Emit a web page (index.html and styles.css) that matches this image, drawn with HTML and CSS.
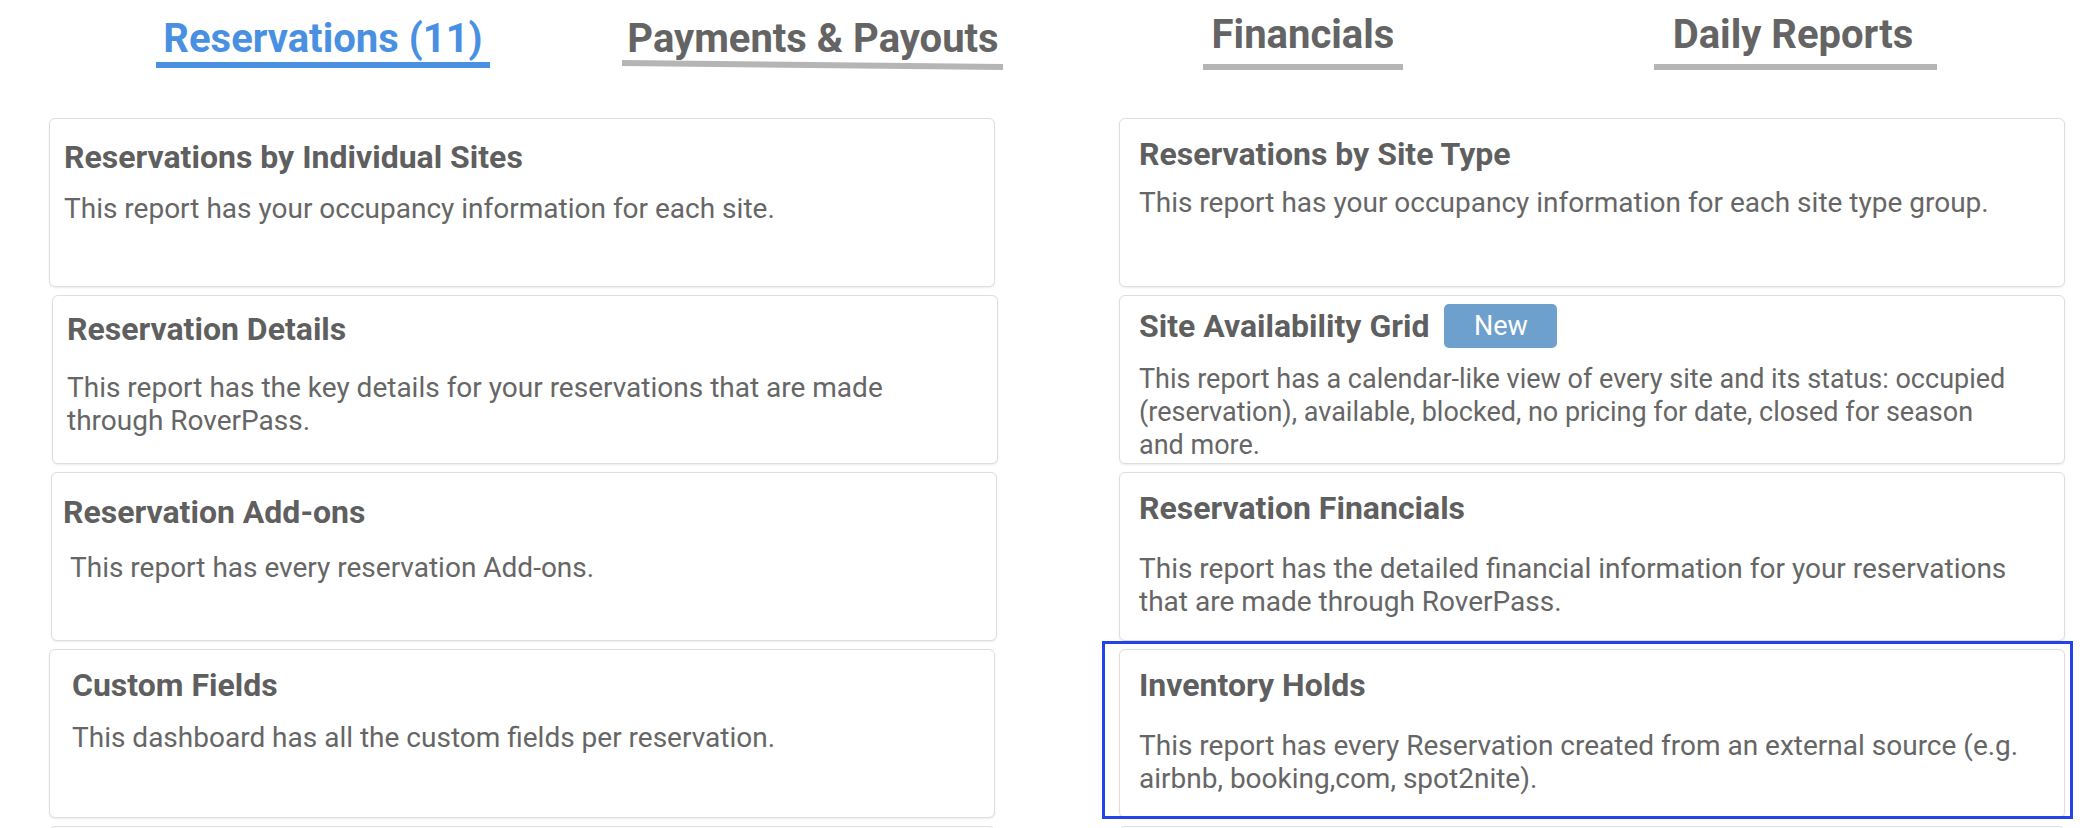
FILE: index.html
```html
<!DOCTYPE html>
<html>
<head>
  <meta charset="utf-8">
  <link rel="stylesheet" href="styles.css">
</head>
<body>
  <div class="tabs">
    <div class="tab-cell"><span class="tab tab--active">Reservations (11)</span></div>
    <div class="tab-cell"><span class="tab tab--tilt">Payments &amp; Payouts</span></div>
    <div class="tab-cell"><span class="tab tab--lift">Financials</span></div>
    <div class="tab-cell"><span class="tab tab--lift tab--wide">Daily Reports</span></div>
  </div>

  <div class="reports">
    <div class="card">
      <div class="card-title">Reservations by Individual Sites</div>
      <div class="card-text">This report has your occupancy information for each site.</div>
    </div>
    <div class="card card--snug">
      <div class="card-title">Reservations by Site Type</div>
      <div class="card-text">This report has your occupancy information for each site type group.</div>
    </div>

    <div class="card card--nudge">
      <div class="card-title">Reservation Details</div>
      <div class="card-text">This report has the key details for your reservations that are made through RoverPass.</div>
    </div>
    <div class="card card--badged">
      <div class="card-head">
        <div class="card-title">Site Availability Grid</div>
        <span class="badge">New</span>
      </div>
      <div class="card-text">This report has a calendar-like view of every site and its status: occupied (reservation), available, blocked, no pricing for date, closed for season<br>and more.</div>
    </div>

    <div class="card card--low">
      <div class="card-title">Reservation Add-ons</div>
      <div class="card-text">This report has every reservation Add-ons.</div>
    </div>
    <div class="card card--loose">
      <div class="card-title">Reservation Financials</div>
      <div class="card-text">This report has the detailed financial information for your reservations that are made through RoverPass.</div>
    </div>

    <div class="card card--deep">
      <div class="card-title">Custom Fields</div>
      <div class="card-text">This dashboard has all the custom fields per reservation.</div>
    </div>
    <div class="card card--loose">
      <div class="card-title">Inventory Holds</div>
      <div class="card-text">This report has every Reservation created from an external source (e.g. airbnb, booking,com, spot2nite).</div>
      <div class="mark"></div>
    </div>

    <div class="card"></div>
    <div class="card"></div>
  </div>
</body>
</html>
```

FILE: styles.css
```css
* {
  margin: 0;
  padding: 0;
  box-sizing: border-box;
}

body {
  width: 2096px;
  height: 828px;
  overflow: hidden;
  background: #ffffff;
  font-family: Roboto, 'Noto Sans', sans-serif;
  color: #666666;
}

/* Top tab strip */
.tabs {
  display: grid;
  grid-template-columns: repeat(4, 490px);
  padding: 16px 0 0 78px;
}

.tab-cell {
  text-align: center;
}

.tab {
  display: inline-block;
  font-size: 40px;
  line-height: 46px;
  font-weight: 700;
  color: #646464;
  white-space: nowrap;
}

.tab::after {
  content: '';
  display: block;
  height: 6px;
  margin: 0 -7px;
  background: #b5b5b5;
}

.tab--active {
  color: #4a90e2;
}

.tab--active::after {
  background: #4a90e2;
}

.tab--tilt::after {
  margin: 0 -5px;
  transform: rotate(0.6deg);
}

.tab--lift {
  margin-top: -4px;
}

.tab--lift::after {
  margin-top: 6px;
  margin-left: -9px;
  margin-right: -9px;
}

.tab--wide::after {
  margin-left: -19px;
  margin-right: -24px;
}

/* Report cards */
.reports {
  display: grid;
  grid-template-columns: 946px 946px;
  column-gap: 124px;
  row-gap: 8px;
  padding-left: 49px;
  margin-top: 48px;
}

.card {
  position: relative;
  height: 169px;
  padding: 20px 20px 0 14px;
  background: #ffffff;
  border: 1px solid #dedede;
  border-radius: 6px;
  box-shadow: 0 1px 2px rgba(0, 0, 0, 0.08);
}

.card:nth-child(even) {
  padding-left: 19px;
}

.card-title {
  font-size: 32px;
  line-height: 36px;
  font-weight: 700;
  color: #5f5f5f;
  margin-bottom: 17px;
}

.card-text {
  font-size: 28px;
  line-height: 33px;
  color: #666666;
}

.card--nudge {
  margin: 0 -3px 0 3px;
  padding-top: 15px;
}

.card--nudge .card-title {
  margin-bottom: 24px;
}

.card--deep {
  padding-top: 17px;
  padding-left: 22px;
}

.card--deep .card-title {
  margin-bottom: 18px;
}

.card--snug {
  padding-top: 17px;
}

.card--snug .card-title {
  margin-bottom: 14px;
}

.card--low {
  margin: 0 -2px 0 2px;
  padding-top: 21px;
  padding-left: 11px;
}

.card--low .card-title {
  margin-bottom: 21px;
}

.card--low .card-text {
  padding-left: 7px;
}

.card--loose {
  padding-top: 17px;
}

.card--loose .card-title {
  margin-bottom: 26px;
}

/* Title row with a badge beside it */
.card--badged {
  padding-top: 8px;
}

.card--badged .card-text {
  font-size: 27px;
}

.card-head {
  display: flex;
  align-items: center;
  gap: 15px;
  margin-bottom: 15px;
}

.card-head .card-title {
  margin-bottom: 0;
}

.badge {
  display: inline-flex;
  align-items: center;
  justify-content: center;
  width: 113px;
  height: 44px;
  background: #6ea0cd;
  border-radius: 5px;
  color: #ffffff;
  font-size: 27px;
}

/* Highlight frame drawn over a card */
.mark {
  position: absolute;
  top: -9px;
  right: -9px;
  bottom: -2px;
  left: -18px;
  border: 3px solid #2443ea;
  pointer-events: none;
}
```
